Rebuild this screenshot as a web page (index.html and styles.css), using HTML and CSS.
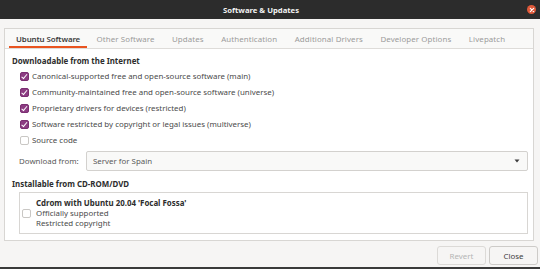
FILE: index.html
```html
<!DOCTYPE html>
<html>
<head>
<meta charset="utf-8">
<link rel="stylesheet" href="styles.css">
</head>
<body>
<div class="window">
  <div class="titlebar">
    <span class="title">Software &amp; Updates</span>
    <span class="close-btn"><svg width="8" height="8" viewBox="0 0 8 8"><path d="M2.3 2.3 L5.7 5.7 M5.7 2.3 L2.3 5.7" stroke="#fff" stroke-width="1.1" stroke-linecap="round"/></svg></span>
  </div>
  <div class="body">
    <div class="notebook">
      <div class="tabs">
        <div class="tab active">Ubuntu Software</div>
        <div class="tab">Other Software</div>
        <div class="tab">Updates</div>
        <div class="tab">Authentication</div>
        <div class="tab">Additional Drivers</div>
        <div class="tab">Developer Options</div>
        <div class="tab">Livepatch</div>
      </div>
      <div class="page">
        <div class="heading">Downloadable from the Internet</div>
        <div class="checks">
          <div class="row"><span class="cb on"></span>Canonical-supported free and open-source software (main)</div>
          <div class="row"><span class="cb on"></span>Community-maintained free and open-source software (universe)</div>
          <div class="row"><span class="cb on"></span>Proprietary drivers for devices (restricted)</div>
          <div class="row"><span class="cb on"></span>Software restricted by copyright or legal issues (multiverse)</div>
          <div class="row"><span class="cb"></span>Source code</div>
        </div>
        <div class="download">
          <span class="dl-label">Download from:</span>
          <div class="combo"><span>Server for Spain</span><svg width="6" height="4" viewBox="0 0 6 4"><path d="M0.5 0.5 L5.5 0.5 L3 3.5 Z" fill="#3d3d3d"/></svg></div>
        </div>
        <div class="heading heading2">Installable from CD-ROM/DVD</div>
        <div class="cdbox">
          <span class="cb"></span>
          <div class="cdtext">
            <div class="cdname">Cdrom with Ubuntu 20.04 'Focal Fossa'</div>
            <div>Officially supported</div>
            <div>Restricted copyright</div>
          </div>
        </div>
      </div>
    </div>
    <div class="buttons">
      <div class="btn disabled">Revert</div>
      <div class="btn">Close</div>
    </div>
  </div>
</div>
</body>
</html>
```
FILE: styles.css
```css
* { box-sizing: border-box; }
html, body { margin: 0; padding: 0; }
body {
  width: 540px;
  height: 269px;
  overflow: hidden;
  background: #3a3a3a;
  font-family: "Noto Sans", "DejaVu Sans", sans-serif;
  font-size: 7.9px;
  color: #3d3d3d;
  white-space: nowrap;
}
.window {
  width: 542px;
  height: 267px;
  background: #f6f5f4;
  display: flex;
  flex-direction: column;
}
.titlebar {
  height: 19px;
  background: #2c2c2c;
  position: relative;
  display: flex;
  align-items: center;
  justify-content: center;
  flex-shrink: 0;
}
.title {
  color: #f2f2f2;
  font-weight: bold;
  font-size: 7.7px;
  margin-right: 20px;
}
.close-btn {
  position: absolute;
  right: 6px;
  top: 5px;
  width: 9px;
  height: 9px;
  border-radius: 50%;
  background: #e0593a;
  display: flex;
  align-items: center;
  justify-content: center;
}
.body {
  flex: 1;
  display: flex;
  flex-direction: column;
  padding: 9px 8px 0 4px;
}
.notebook {
  border: 1px solid #d8d6d3;
  background: #fff;
  height: 213px;
  display: flex;
  flex-direction: column;
}
.tabs {
  height: 20px;
  background: #f9f9f8;
  border-bottom: 1px solid #dedcd9;
  display: flex;
  padding-left: 4px;
}
.tab {
  color: #9b9b9b;
  padding: 0 8px 0 7px;
  display: flex;
  align-items: center;
  justify-content: center;
  height: 19px;
  letter-spacing: 0.1px;
}
.tab + .tab { margin-left: 2.5px; }
.tab.active {
  color: #3d3d3d;
  font-weight: 600;
  letter-spacing: -0.1px;
  padding-right: 7px;
  box-shadow: inset 0 -2px 0 #e95420;
}
.page {
  padding: 5px 5px 0 7px;
  flex: 1;
}
.heading {
  font-weight: bold;
  height: 14px;
  line-height: 14px;
  color: #2d2d2d;
}
.checks {
  padding-left: 8px;
}
.row {
  height: 16px;
  display: flex;
  align-items: center;
  color: #4a4a4a;
}
.cb {
  width: 9px;
  height: 9px;
  border: 1px solid #c9c7c4;
  border-radius: 2px;
  background: #fff;
  margin-right: 3px;
  flex-shrink: 0;
  position: relative;
}
.cb.on {
  background: #8c3c82;
  border-color: #7b2f72;
}
.cb.on::after {
  content: "";
  position: absolute;
  left: 2px;
  top: 0px;
  width: 2px;
  height: 4.5px;
  border-right: 1.3px solid #fff;
  border-bottom: 1.3px solid #fff;
  transform: rotate(40deg);
}
.download {
  display: flex;
  align-items: center;
  margin-top: 3px;
  height: 20px;
}
.dl-label {
  width: 74px;
  padding-left: 7px;
  color: #5a5a5a;
}
.combo {
  flex: 1;
  height: 20px;
  border: 1px solid #d3d1ce;
  border-radius: 2px;
  background: #f9f9f8;
  display: flex;
  align-items: center;
  justify-content: space-between;
  padding: 0 7px 0 6px;
  color: #5a5a5a;
}
.heading2 {
  margin-top: 6px;
}
.cdbox {
  margin: 1px 0 0 7px;
  height: 42px;
  border: 1px solid #d8d6d3;
  display: flex;
  align-items: center;
  padding-left: 2px;
}
.cdbox .cb { margin-right: 5px; }
.cdtext {
  line-height: 10px;
  color: #4a4a4a;
}
.cdname { font-weight: bold; color: #2d2d2d; }
.buttons {
  display: flex;
  justify-content: flex-end;
  gap: 3px;
  margin-top: 5px;
  margin-right: -4px;
}
.btn {
  width: 49px;
  height: 19px;
  border: 1px solid #cdcbc8;
  border-radius: 3px;
  background: #f6f5f4;
  display: flex;
  align-items: center;
  justify-content: center;
  color: #3d3d3d;
}
.btn.disabled { color: #b5b5b5; border-color: #dcdad7; }
```
